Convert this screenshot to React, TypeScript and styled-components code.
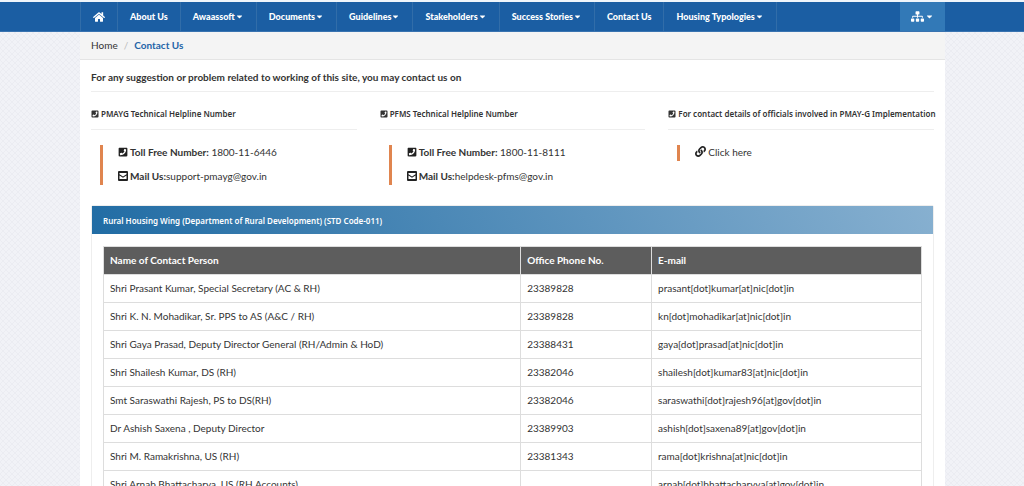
import React from "react";
import styled, { createGlobalStyle } from "styled-components";
import { FaHome, FaSitemap, FaPhoneSquare, FaLink, FaCaretDown } from "react-icons/fa";

const Global = createGlobalStyle`
  * { box-sizing: border-box; }
  body {
    margin: 0;
    color: #333;
    font: 10px/16px Lato, "Noto Sans", sans-serif;
    background: #f1f2f7 url("data:image/svg+xml,%3Csvg xmlns='http://www.w3.org/2000/svg' width='6' height='6'%3E%3Cpath d='M0 0L6 6M6 0L0 6' stroke='%23ebecf2' stroke-width='1'/%3E%3C/svg%3E");
  }
  a { color: inherit; text-decoration: none; }
  h1, h2, ul, ol, p { margin: 0; padding: 0; list-style: none; }
`;

const NavBar = styled.nav`
  display: flex;
  justify-content: space-between;
  height: 32px;
  padding: 0 79px 0 80px;
  background: #1b5ea3;
  border-top: 2px solid #eff5fb;
  border-bottom: 1px solid #3973b0;
`;

const NavList = styled.ul`
  display: flex;
  border-left: 1px solid #316da9;
`;

const NavLink = styled.a`
  display: flex;
  align-items: center;
  height: 29px;
  padding: 0 12px;
  color: #fff;
  font-size: 9px;
  font-weight: 900;
  white-space: nowrap;
  border-right: 1px solid #316da9;
`;

const SiteMapButton = styled.button`
  display: flex;
  align-items: center;
  justify-content: center;
  gap: 1px;
  width: 45px;
  padding: 0;
  color: #fff;
  background: #3279b7;
  border: 0;
`;

const Page = styled.div`
  margin: 0 79px 0 80px;
  background: #fff;
`;

const Breadcrumb = styled.ol`
  display: flex;
  gap: 6px;
  height: 28px;
  padding: 5px 11px;
  background: #f4f4f4;
  border-bottom: 1px solid #e4e4e4;
`;

const Current = styled.li`
  color: #2564a8;
  font-weight: 700;
`;

const Slash = styled.li`
  color: #bbb;
`;

const Content = styled.main`
  padding: 0 11px;
`;

const Intro = styled.h1`
  padding: 9px 0 6px;
  font-size: 10px;
  font-weight: 700;
  line-height: 16px;
  border-bottom: 1px solid #eee;
`;

const Columns = styled.div`
  display: grid;
  grid-template-columns: repeat(3, minmax(0, 1fr));
  gap: 23px;
  padding: 15px 0 20px;
`;

const ColumnTitle = styled.h2`
  display: flex;
  align-items: center;
  gap: 2px;
  height: 23px;
  padding-bottom: 8px;
  font-family: "Noto Sans", sans-serif;
  font-size: 8px;
  font-weight: 600;
  white-space: nowrap;
  border-bottom: 1px solid #eee;
  svg { flex: none; }
`;

const Details = styled.div`
  display: flex;
  flex-direction: column;
  gap: 8px;
  margin: 15px 0 0 9px;
  padding-left: 15px;
  border-left: 3px solid #e0854f;
`;

const Line = styled.div`
  height: 16px;
  line-height: 15px;
  white-space: nowrap;
  svg {
    margin-right: 2px;
    color: #222;
    vertical-align: -1px;
  }
`;

const Panel = styled.section`
  border: 1px solid #eee;
  border-radius: 2px;
`;

const PanelTitle = styled.h2`
  height: 28px;
  padding: 0 11px;
  color: #fff;
  font-family: "Noto Sans", sans-serif;
  font-size: 8px;
  font-weight: 600;
  line-height: 30px;
  background: linear-gradient(60deg, #216ca4, #87b0d0);
`;

const PanelBody = styled.div`
  padding: 12px 11px;
`;

const Table = styled.table`
  width: 100%;
  border-collapse: collapse;
  table-layout: fixed;
`;

const HeadCell = styled.th<{ $width: string }>`
  width: ${(p) => p.$width};
  height: 28px;
  padding: 0 6px 2px;
  color: #fff;
  text-align: left;
  background: #5d5d5d;
  border: 1px solid #ddd;
`;

const Cell = styled.td`
  height: 28px;
  padding: 0 6px 2px;
  border: 1px solid #ddd;
`;

const MailIcon = () => (
  <svg width="10" height="10" viewBox="0 0 10 10" aria-hidden="true">
    <rect width="10" height="10" rx="1" fill="#222" />
    <path d="M1.5 2h7v1.300L5 5.600 1.500 3.300zM1.500 4.600L5 6.800l3.500-2.200V8h-7z" fill="#fff" />
  </svg>
);

const menu: [string, boolean][] = [
  ["About Us", false],
  ["Awaassoft", true],
  ["Documents", true],
  ["Guidelines", true],
  ["Stakeholders", true],
  ["Success Stories", true],
  ["Contact Us", false],
  ["Housing Typologies", true],
];

const contacts = [
  ["Shri Prasant Kumar, Special Secretary (AC & RH)", "23389828", "prasant[dot]kumar[at]nic[dot]in"],
  ["Shri K. N. Mohadikar, Sr. PPS to AS (A&C / RH)", "23389828", "kn[dot]mohadikar[at]nic[dot]in"],
  ["Shri Gaya Prasad, Deputy Director General (RH/Admin & HoD)", "23388431", "gaya[dot]prasad[at]nic[dot]in"],
  ["Shri Shailesh Kumar, DS (RH)", "23382046", "shailesh[dot]kumar83[at]nic[dot]in"],
  ["Smt Saraswathi Rajesh, PS to DS(RH)", "23382046", "saraswathi[dot]rajesh96[at]gov[dot]in"],
  ["Dr Ashish Saxena , Deputy Director", "23389903", "ashish[dot]saxena89[at]gov[dot]in"],
  ["Shri M. Ramakrishna, US (RH)", "23381343", "rama[dot]krishna[at]nic[dot]in"],
  ["Shri Arnab Bhattacharya, US (RH Accounts)", "", "arnab[dot]bhattacharyya[at]gov[dot]in"],
];

const helplines = [
  { title: "PMAYG Technical Helpline Number", phone: "1800-11-6446", mail: "support-pmayg@gov.in" },
  { title: "PFMS Technical Helpline Number", phone: "1800-11-8111", mail: "helpdesk-pfms@gov.in" },
];

export default function App() {
  return (
    <>
      <Global />
      <NavBar>
        <NavList>
          <li><NavLink href="#" aria-label="Home"><FaHome size={12} /></NavLink></li>
          {menu.map(([label, drop]) => (
            <li key={label}>
              <NavLink href="#">{label}{drop && <FaCaretDown size={9} />}</NavLink>
            </li>
          ))}
        </NavList>
        <SiteMapButton aria-label="Site map"><FaSitemap size={13} /><FaCaretDown size={9} /></SiteMapButton>
      </NavBar>
      <Page>
        <Breadcrumb>
          <li><a href="#">Home</a></li>
          <Slash>/</Slash>
          <Current>Contact Us</Current>
        </Breadcrumb>
        <Content>
          <Intro>For any suggestion or problem related to working of this site, you may contact us on</Intro>
          <Columns>
            {helplines.map((h) => (
              <section key={h.title}>
                <ColumnTitle><FaPhoneSquare size={8} />{h.title}</ColumnTitle>
                <Details>
                  <Line><FaPhoneSquare size={10} /><b>Toll Free Number:</b> {h.phone}</Line>
                  <Line><MailIcon /><b>Mail Us:</b>{h.mail}</Line>
                </Details>
              </section>
            ))}
            <section>
              <ColumnTitle><FaPhoneSquare size={8} />For contact details of officials involved in PMAY-G Implementation</ColumnTitle>
              <Details>
                <Line><FaLink size={11} /><a href="#">Click here</a></Line>
              </Details>
            </section>
          </Columns>
          <Panel>
            <PanelTitle>Rural Housing Wing (Department of Rural Development) (STD Code-011)</PanelTitle>
            <PanelBody>
              <Table>
                <thead>
                  <tr>
                    <HeadCell $width="51%">Name of Contact Person</HeadCell>
                    <HeadCell $width="16%">Office Phone No.</HeadCell>
                    <HeadCell $width="33%">E-mail</HeadCell>
                  </tr>
                </thead>
                <tbody>
                  {contacts.map(([name, phone, mail]) => (
                    <tr key={mail}><Cell>{name}</Cell><Cell>{phone}</Cell><Cell>{mail}</Cell></tr>
                  ))}
                </tbody>
              </Table>
            </PanelBody>
          </Panel>
        </Content>
      </Page>
    </>
  );
}
